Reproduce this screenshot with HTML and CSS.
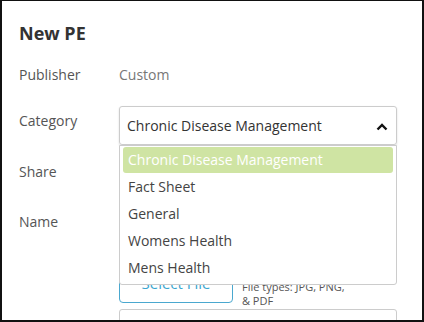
FILE: index.html
```html
<!DOCTYPE html>
<html>
<head>
    <title>New PE</title>
    <link rel="stylesheet" href="styles.css">
</head>
<body>
    <div class="frame">
        <h2 class="title">New PE</h2>
        <div class="row row-publisher">
            <div class="label">Publisher</div>
            <div class="value">Custom</div>
        </div>
        <div class="row">
            <div class="label">Category</div>
            <div class="select-wrap">
                <div class="select">
                    <span>Chronic Disease Management</span>
                    <svg class="caret" width="12" height="8" viewBox="0 0 12 8">
                        <path d="M1.5 6.5 L6 2 L10.5 6.5" fill="none" stroke="#111" stroke-width="2.4"/>
                    </svg>
                </div>
                <ul class="menu">
                    <li class="active">Chronic Disease Management</li>
                    <li>Fact Sheet</li>
                    <li>General</li>
                    <li>Womens Health</li>
                    <li>Mens Health</li>
                </ul>
            </div>
        </div>
        <div class="row">
            <div class="label">Share</div>
            <div class="input"></div>
        </div>
        <div class="row">
            <div class="label">Name</div>
            <div class="input"></div>
        </div>
        <div class="row">
            <div class="label"></div>
            <div class="upload">
                <button class="file-btn">Select File</button>
                <div class="file-note">File types: JPG, PNG,<br>&amp; PDF</div>
            </div>
        </div>
        <div class="row row-last">
            <div class="label"></div>
            <div class="input"></div>
        </div>
    </div>
</body>
</html>
```

FILE: styles.css
```css
body {
    margin: 0;
    font-family: "Open Sans", Arial, sans-serif;
    background-color: #fff;
}
.frame {
    width: 424px;
    height: 322px;
    box-sizing: border-box;
    border: 2px solid #111;
    border-top-width: 1px;
    padding: 20px 0 0 17px;
    overflow: hidden;
}
.title {
    margin: 0;
    font-size: 18px;
    line-height: 24px;
    font-weight: bold;
    color: #333;
}
.row {
    display: grid;
    grid-template-columns: 100px 278px;
    margin-top: 12px;
    min-height: 38px;
}
.row-publisher {
    margin-top: 15px;
    min-height: 34px;
}
.label {
    padding-top: 5px;
    font-size: 14px;
    line-height: 20px;
    color: #555;
}
.value {
    padding-top: 5px;
    font-size: 14px;
    line-height: 20px;
    color: #777;
}
.select-wrap {
    position: relative;
}
.select {
    height: 39px;
    box-sizing: border-box;
    border: 1px solid #ccc;
    border-radius: 3px;
    box-shadow: 0 1px 2px rgba(0, 0, 0, 0.15);
    padding: 0 8px 0 7px;
    display: flex;
    align-items: center;
    justify-content: space-between;
    font-size: 14px;
    color: #333;
}
.caret {
    margin-top: 3px;
}
.menu {
    position: absolute;
    top: 39px;
    left: 0;
    right: 0;
    margin: 0;
    padding: 1px 3px 2px;
    list-style: none;
    background-color: #fff;
    border: 1px solid #ccc;
    border-radius: 0 0 3px 3px;
    z-index: 2;
}
.menu li {
    height: 26px;
    line-height: 26px;
    margin-bottom: 1px;
    padding-left: 5px;
    font-size: 14px;
    color: #444;
    border-radius: 3px;
}
.menu li.active {
    background-color: #cfe4a3;
    color: #fff;
}
.input {
    height: 38px;
    box-sizing: border-box;
    border: 1px solid #ccc;
    border-radius: 3px;
}
.upload {
    display: flex;
    align-items: flex-start;
    gap: 9px;
    margin-top: 6px;
    height: 40px;
}
.file-btn {
    width: 114px;
    height: 40px;
    border: 1px solid #4aa8cf;
    border-radius: 4px;
    background-color: #fff;
    color: #3aa6d0;
    font-family: "Open Sans", Arial, sans-serif;
    font-size: 15px;
}
.file-note {
    font-size: 11px;
    line-height: 14px;
    color: #555;
    margin-top: 17px;
}
.row-last {
    margin-top: 6px;
}
```
